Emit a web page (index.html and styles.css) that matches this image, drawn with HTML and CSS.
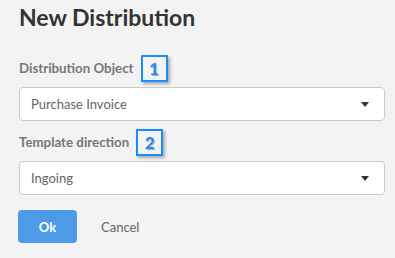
FILE: index.html
```html
<!DOCTYPE html>
<html lang="en">
<head>
    <meta charset="UTF-8">
    <meta name="viewport" content="width=device-width, initial-scale=1.0">
    <title>New Distribution</title>
    <link rel="stylesheet" href="styles.css">
</head>
<body>
    <div class="dialog">
        <h1>New Distribution</h1>

        <div class="field">
            <div class="field-label">
                <span>Distribution Object</span>
                <span class="step">1</span>
            </div>
            <div class="select">
                <span>Purchase Invoice</span>
                <span class="caret"></span>
            </div>
        </div>

        <div class="field">
            <div class="field-label">
                <span>Template direction</span>
                <span class="step">2</span>
            </div>
            <div class="select">
                <span>Ingoing</span>
                <span class="caret"></span>
            </div>
        </div>

        <div class="actions">
            <button class="btn-ok">Ok</button>
            <button class="btn-cancel">Cancel</button>
        </div>
    </div>
</body>
</html>
```

FILE: styles.css
```css
body {
    margin: 0;
    background-color: #f3f3f3;
    font-family: Lato, "Liberation Sans", sans-serif;
    color: #666;
}
.dialog {
    padding: 2px 10px 0 19px;
}
h1 {
    margin: 0 0 22px 0;
    font-size: 23px;
    font-weight: 700;
    color: #333;
    line-height: 30px;
}
.field {
    margin-bottom: 7px;
}
.field-label {
    display: flex;
    align-items: center;
    gap: 7px;
    font-size: 13.3px;
    font-weight: 700;
    color: #777;
    height: 28px;
    margin-bottom: 5px;
}
.step {
    width: 23px;
    height: 23px;
    border: 2px solid #1a8cff;
    display: flex;
    align-items: center;
    justify-content: center;
    color: #1a8cff;
    font-size: 17px;
    font-weight: 700;
    text-shadow: 1px 1px 1px rgba(0, 0, 0, 0.3);
    box-shadow: 2px 2px 3px rgba(0, 0, 0, 0.3);
}
.select {
    height: 32px;
    background: #fff;
    border: 1px solid #ccc;
    border-radius: 4px;
    display: flex;
    align-items: center;
    justify-content: space-between;
    padding: 0 15px 0 11px;
    font-size: 13px;
    color: #666;
}
.caret {
    width: 0;
    height: 0;
    border-left: 4px solid transparent;
    border-right: 4px solid transparent;
    border-top: 5px solid #333;
}
.actions {
    display: flex;
    align-items: center;
    gap: 24px;
    margin-top: 15px;
}
button {
    font-family: Lato, "Liberation Sans", sans-serif;
    font-size: 13px;
    border: none;
    cursor: pointer;
}
.btn-ok {
    width: 59px;
    height: 33px;
    background-color: #4d9be6;
    color: #fff;
    font-weight: 700;
    border-radius: 4px;
    margin-left: -1px;
}
.btn-cancel {
    background: none;
    color: #666;
    padding: 0;
}
```
